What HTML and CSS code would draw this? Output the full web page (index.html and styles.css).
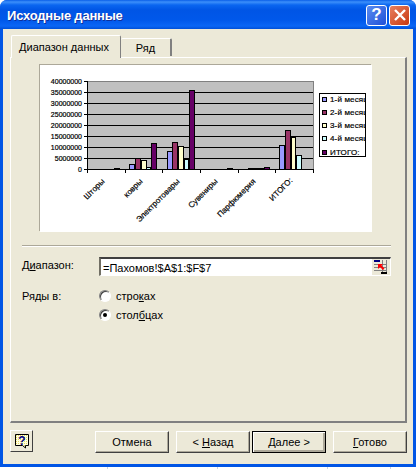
FILE: index.html
```html
<!DOCTYPE html>
<html lang="ru">
<head>
    <meta charset="UTF-8">
    <meta name="viewport" content="width=device-width, initial-scale=1.0">
    <title>Исходные данные</title>
    <link rel="stylesheet" href="styles.css">
</head>
<body>
    <div class="window">
        <div class="titlebar">
            <span class="title">Исходные данные</span>
            <span class="cap-btn cap-help">?</span>
            <span class="cap-btn cap-close">
                <svg width="14" height="14" viewBox="0 0 14 14"><path d="M2 2 L12 12 M12 2 L2 12" stroke="#fff" stroke-width="2.4"/></svg>
            </span>
        </div>
        <div class="body">
            <div class="tabs">
                <div class="tab active">Диапазон данных</div>
                <div class="tab">Ряд</div>
            </div>
            <div class="panel">
                <div class="chart">
                    <svg width="332" height="167" viewBox="40 65 332 167" class="chart-svg">
                        <defs>
                            <clipPath id="legendClip"><rect x="320" y="94" width="45" height="62"/></clipPath>
                        </defs>
                        <rect x="87.5" y="81.5" width="226" height="88" fill="#c0c0c0" stroke="#808080"/>
                        <path d="M87 92.5H313M87 103.5H313M87 114.5H313M87 125.5H313M87 136.5H313M87 147.5H313M87 158.5H313" stroke="#000"/>
                        <path d="M87.5 81V170M84 81.5H88M84 92.5H88M84 103.5H88M84 114.5H88M84 125.5H88M84 136.5H88M84 147.5H88M84 158.5H88M84 169.5H314M125.5 169V173M162.5 169V173M200.5 169V173M238.5 169V173M275.5 169V173M313.5 169V173M87.5 169V173" stroke="#000" fill="none"/>
                        <g stroke="#000">
                            <rect x="114.5" y="168.5" width="5" height="1" fill="#660066"/>
                            <rect x="129.5" y="164.5" width="5" height="5" fill="#9999ff"/>
                            <rect x="135.5" y="158.5" width="5" height="11" fill="#993366"/>
                            <rect x="141.5" y="160.5" width="5" height="9" fill="#ffffcc"/>
                            <rect x="146.5" y="167.5" width="4" height="2" fill="#ccffff"/>
                            <rect x="151.5" y="143.5" width="5" height="26" fill="#660066"/>
                            <rect x="167.5" y="151.5" width="5" height="18" fill="#9999ff"/>
                            <rect x="172.5" y="142.5" width="5" height="27" fill="#993366"/>
                            <rect x="178.5" y="146.5" width="5" height="23" fill="#ffffcc"/>
                            <rect x="184.5" y="159.5" width="4" height="10" fill="#ccffff"/>
                            <rect x="189.5" y="90.5" width="5" height="79" fill="#660066"/>
                            <rect x="227.5" y="168.5" width="5" height="1" fill="#660066"/>
                            <rect x="248.5" y="168.5" width="15" height="1" fill="#660066"/>
                            <rect x="264.5" y="167.5" width="5" height="2" fill="#660066"/>
                            <rect x="279.5" y="145.5" width="5" height="24" fill="#9999ff"/>
                            <rect x="285.5" y="130.5" width="5" height="39" fill="#993366"/>
                            <rect x="291.5" y="137.5" width="4" height="32" fill="#ffffcc"/>
                            <rect x="296.5" y="155.5" width="5" height="14" fill="#ccffff"/>
                        </g>
                        <g class="axis-y" text-anchor="end">
                            <text x="82" y="84">40000000</text>
                            <text x="82" y="95">35000000</text>
                            <text x="82" y="106">30000000</text>
                            <text x="82" y="117">25000000</text>
                            <text x="82" y="128">20000000</text>
                            <text x="82" y="139">15000000</text>
                            <text x="82" y="150">10000000</text>
                            <text x="82" y="161">5000000</text>
                            <text x="82" y="172">0</text>
                        </g>
                        <g class="axis-x" text-anchor="end">
                            <text transform="translate(105 182) rotate(-45)">Шторы</text>
                            <text transform="translate(143 182) rotate(-45)">ковры</text>
                            <text transform="translate(180 182) rotate(-45)">Электротовары</text>
                            <text transform="translate(218 182) rotate(-45)">Сувениры</text>
                            <text transform="translate(256 182) rotate(-45)">Парфюмерия</text>
                            <text transform="translate(293 181) rotate(-45)">ИТОГО:</text>
                        </g>
                        <rect x="319.5" y="93.5" width="46" height="63" fill="#fff" stroke="#000"/>
                        <g stroke="#000">
                            <rect x="322.5" y="97.5" width="4" height="4" fill="#9999ff"/>
                            <rect x="322.5" y="110.5" width="4" height="4" fill="#993366"/>
                            <rect x="322.5" y="123.5" width="4" height="4" fill="#ffffcc"/>
                            <rect x="322.5" y="136.5" width="4" height="4" fill="#ccffff"/>
                            <rect x="322.5" y="150.5" width="4" height="4" fill="#660066"/>
                        </g>
                        <g class="legend" clip-path="url(#legendClip)">
                            <text x="330" y="102">1-й месяц</text>
                            <text x="330" y="115">2-й месяц</text>
                            <text x="330" y="128">3-й месяц</text>
                            <text x="330" y="141">4-й месяц</text>
                            <text x="330" y="155">ИТОГО:</text>
                        </g>
                    </svg>
                </div>
                <div class="separator"></div>
                <div class="form-grid">
                    <label class="form-label range-label">Д<u>и</u>апазон:</label>
                    <div class="range-field">
                        <span class="range-text">=Пахомов!$A$1:$F$7</span>
                        <span class="range-btn">
                            <svg width="17" height="16" viewBox="0 0 17 16">
                                <rect x="2" y="1" width="6" height="2" fill="#000080"/>
                                <path d="M2 5.5H15M2 8.5H15M2 11.5H15M10.5 1V14M14.5 1V14" stroke="#808080" fill="none"/>
                                <rect x="9" y="13" width="6" height="2" fill="#000"/>
                                <path d="M6 5 L11 5 L9.5 6.5 L12.5 9.5 L11 11 L8 8 L6 10 Z" fill="#f00"/>
                            </svg>
                        </span>
                    </div>
                    <span class="form-label series-label">Ряды в:</span>
                    <div class="radio-list">
                        <div class="radio-row"><span class="radio"></span><span>стро<u>к</u>ах</span></div>
                        <div class="radio-row"><span class="radio checked"></span><span>стол<u>б</u>цах</span></div>
                    </div>
                </div>
            </div>
            <div class="footer">
                <div class="help-btn">
                    <svg width="16" height="16" viewBox="0 0 16 16">
                        <defs>
                            <pattern id="helpDots" width="2" height="2" patternUnits="userSpaceOnUse">
                                <rect width="2" height="2" fill="#ffffe0"/>
                                <rect width="1" height="1" fill="#e8d860"/>
                            </pattern>
                        </defs>
                        <path d="M1.5 1.5H14.5V12.5H11.5V15L8.5 12.5H1.5Z" fill="url(#helpDots)" stroke="#000"/>
                        <text x="8" y="11.5" text-anchor="middle" class="help-mark">?</text>
                    </svg>
                </div>
                <button class="btn btn-first">Отмена</button>
                <button class="btn btn-back">&lt; <u>Н</u>азад</button>
                <button class="btn btn-next">Далее &gt;</button>
                <button class="btn btn-done"><u>Г</u>отово</button>
            </div>
        </div>
    </div>
    <div class="sheet"></div>
</body>
</html>
```

FILE: styles.css
```css
html, body {
    margin: 0;
    height: 469px;
    overflow: hidden;
    background-color: #fff;
}
body {
    font-family: 'Liberation Sans', Arial, sans-serif;
    font-size: 11px;
    color: #000;
}
.window {
    width: 416px;
    height: 467px;
    box-sizing: border-box;
    border-radius: 7px 7px 0 0;
    background-color: #0055e5;
    display: flex;
    flex-direction: column;
    padding: 0 3px 3px 3px;
}
.sheet {
    height: 2px;
    background:
        linear-gradient(#c8d0e0, #c8d0e0) 107px 0 / 1px 2px no-repeat,
        linear-gradient(#c8d0e0, #c8d0e0) 217px 0 / 1px 2px no-repeat,
        linear-gradient(#c8d0e0, #c8d0e0) 327px 0 / 1px 2px no-repeat,
        linear-gradient(#c8d0e0, #c8d0e0) 390px 0 / 1px 2px no-repeat;
}
.titlebar {
    height: 29px;
    box-sizing: border-box;
    margin: 0 -3px;
    padding: 1px 6px 0 7px;
    display: flex;
    align-items: center;
    gap: 2px;
    border-radius: 7px 7px 0 0;
    background: linear-gradient(#0a5fe8 0, #3c8ffa 2px, #0a66f0 5px, #0055e5 10px, #0058ea 20px, #0a66f5 26px, #0050d8 29px);
}
.title {
    flex: 1;
    color: #fff;
    font-weight: bold;
    font-size: 13px;
    letter-spacing: -0.2px;
    text-shadow: 1px 1px 0 #0f2f9a;
}
.cap-btn {
    width: 21px;
    height: 21px;
    box-sizing: border-box;
    border: 1px solid #fff;
    border-radius: 3px;
    display: flex;
    align-items: center;
    justify-content: center;
    color: #fff;
}
.cap-help {
    background: linear-gradient(135deg, #5a8cf0, #2050d8);
    font-size: 17px;
    font-weight: bold;
}
.cap-close {
    background: linear-gradient(135deg, #e88060, #c83810);
}
.body {
    flex: 1;
    background-color: #ece9d8;
    padding: 7px 6px 0 7px;
}
.tabs {
    display: flex;
    align-items: flex-end;
    height: 21px;
}
.tab {
    box-sizing: border-box;
    width: 51px;
    height: 18px;
    margin-bottom: 1px;
    border-top: 1px solid #fff;
    border-right: 2px solid #808080;
    border-radius: 2px 2px 0 0;
    text-align: center;
    line-height: 19px;
}
.tab.active {
    width: 110px;
    height: 23px;
    margin: 0 0 -1px 1px;
    padding: 1px 4px 0 0;
    background-color: #ece9d8;
    border-left: 1px solid #fff;
    border-right: 1px solid #808080;
    position: relative;
    line-height: 20px;
}
.panel {
    box-sizing: border-box;
    height: 366px;
    border-top: 1px solid #fff;
    border-left: 1px solid #fff;
    border-right: 2px solid #808080;
    border-bottom: 2px solid #808080;
    padding: 7px 0 0 29px;
}
.chart {
    width: 332px;
    height: 167px;
    background-color: #fff;
    box-shadow: -1px -1px 0 #aca899;
}
.chart-svg {
    display: block;
}
.chart-svg text {
    font-family: 'Liberation Sans', Arial, sans-serif;
    font-size: 8px;
    stroke: #000;
    stroke-width: 0.2px;
}
.axis-y text {
    font-size: 7px;
}
.legend text {
    letter-spacing: 0.15px;
}
.separator {
    width: 369px;
    height: 1px;
    margin: 13px 0 0 -18px;
    background-color: #aca899;
    border-bottom: 1px solid #fff;
}
.form-grid {
    margin: 10px 0 0 -18px;
    display: grid;
    grid-template-columns: 77px 292px;
    row-gap: 13px;
}
.form-label {
    line-height: 16px;
}
.series-label {
    line-height: 14px;
}
.range-field {
    box-sizing: border-box;
    height: 19px;
    display: flex;
    align-items: center;
    background-color: #fff;
    border-top: 2px solid #404040;
    border-left: 2px solid #716f64;
    border-right: 1px solid #fff;
    border-bottom: 1px solid #fff;
}
.range-text {
    flex: 1;
    padding: 1px 0 0 2px;
}
.range-btn {
    width: 18px;
    height: 16px;
    background-color: #ece9d8;
    display: flex;
}
.radio-list {
    display: flex;
    flex-direction: column;
    gap: 5px;
}
.radio-row {
    display: flex;
    align-items: center;
    gap: 5px;
    height: 14px;
}
.radio {
    box-sizing: border-box;
    width: 12px;
    height: 12px;
    border-radius: 50%;
    background-color: #fff;
    border: 1px solid;
    border-color: #808080 #fff #fff #808080;
    box-shadow: inset 1px 1px 0 #404040;
    display: flex;
    align-items: center;
    justify-content: center;
}
.radio.checked::after {
    content: "";
    width: 4px;
    height: 4px;
    border-radius: 50%;
    background-color: #000;
}
.footer {
    display: flex;
    align-items: flex-start;
    margin-top: 7px;
}
.help-btn {
    box-sizing: border-box;
    width: 23px;
    height: 22px;
    border: 1px solid;
    border-color: #fff #404040 #404040 #fff;
    display: flex;
    align-items: center;
    justify-content: center;
}
.help-mark {
    font-size: 12px;
    font-weight: bold;
    fill: #000080;
}
.btn {
    box-sizing: border-box;
    width: 74px;
    height: 22px;
    margin-top: 1px;
    padding: 0;
    background-color: #ece9d8;
    border: 1px solid;
    border-color: #fff #404040 #404040 #fff;
    box-shadow: inset -1px -1px 0 #aca899;
    font-family: inherit;
    font-size: 11px;
    color: #000;
}
.btn-first {
    margin-left: 62px;
}
.btn-back {
    margin-left: 7px;
}
.btn-next {
    margin-left: 2px;
    border: 1px solid #000;
    box-shadow: inset 1px 1px 0 #fff, inset -2px -2px 0 #aca899;
}
.btn-done {
    margin-left: 7px;
}
```
